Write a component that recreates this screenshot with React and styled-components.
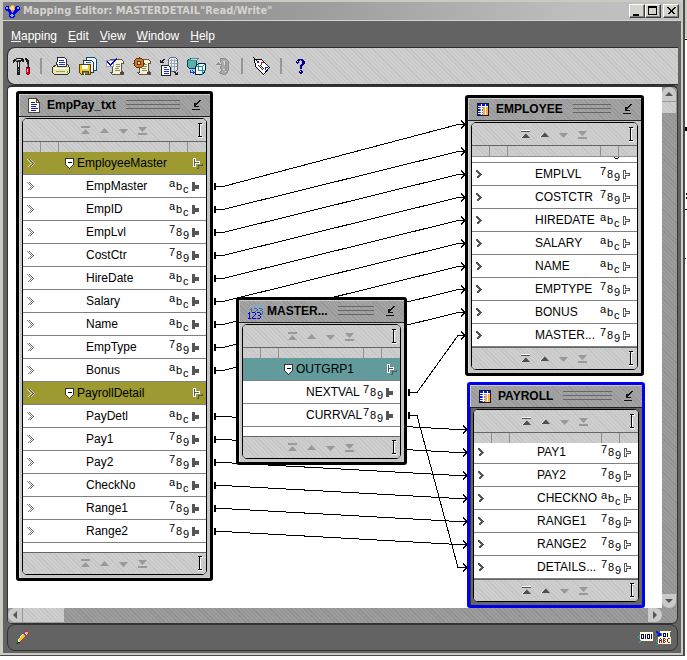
import React from "react";
import styled, { createGlobalStyle, css } from "styled-components";

const GlobalStyle = createGlobalStyle`
  * { box-sizing: border-box; }
  body { margin: 0; background: #fff; font: 12px "Liberation Sans", Arial, sans-serif; color: #000; }
  button { font: inherit; color: inherit; margin: 0; padding: 0; border: 0; background: none; }
  ul { list-style: none; margin: 0; padding: 0; }
  svg { display: block; flex: none; }
`;

const hatch = css`
  background-color: #cbcbcb;
  background-image: repeating-linear-gradient(45deg, #c5c5c5 0 1px, #cecece 1px 3px);
`;
const trough = css`
  background-color: #999;
  background-image: repeating-linear-gradient(45deg, #929292 0 1px, #9c9c9c 1px 3px);
`;

/* ---------- window chrome ---------- */
const Desktop = styled.div`
  display: flex;
  min-height: 100vh;
  padding-bottom: 4px;
`;
const Frame = styled.div`
  flex: 1;
  min-width: 0;
  display: flex;
  border-right: 2px solid #4a4a4a;
  border-bottom: 1px solid #4a4a4a;
`;
const Window = styled.main`
  flex: 1;
  min-width: 0;
  display: flex;
  flex-direction: column;
  border: 2px solid #c9cac2;
  border-left-width: 3px;
  background: #636363;
`;
const TitleBar = styled.header`
  display: flex;
  align-items: center;
  height: 19px;
  padding: 0 2px;
  border-bottom: 1px solid #d4d4cc;
  background: linear-gradient(90deg, #828282, #9c9c9c 45%, #bebebe 85%, #c0c0c0);
`;
const WindowTitle = styled.h1`
  flex: 1;
  margin: 0 0 0 3px;
  font: bold 11px/18px "DejaVu Sans Condensed", "DejaVu Sans", sans-serif;
  color: #d6d3ce;
  white-space: nowrap;
`;
const CaptionButton = styled.button`
  display: grid;
  place-items: center;
  width: 16px;
  height: 14px;
  margin-left: ${(p) => (p.$apart ? "2px" : "0")};
  background: #d4d4cc;
  border: 1px solid;
  border-color: #fff #404040 #404040 #fff;
  box-shadow: inset -1px -1px #848484;
`;
const MenuBar = styled.nav`
  display: flex;
  gap: 11px;
  height: 26px;
  padding: 0 8px;
  align-items: center;
`;
const MenuButton = styled.button`
  color: #fff;
  line-height: 16px;
  padding-top: 4px;
`;
const Toolbar = styled.div`
  display: flex;
  align-items: center;
  height: 38px;
  margin: 0 3px 0 4px;
  border: 1px solid #2e2a2e;
  border-right: 0;
  border-radius: 8px 0 0 8px;
  ${hatch}
`;
const ToolButton = styled.button`
  display: grid;
  place-items: center;
  width: 27px;
  height: 27px;
`;
const Divider = styled.span`
  width: 2px;
  height: 16px;
  margin: 0 5px;
  background: #969696;
`;
const Workspace = styled.section`
  flex: 1;
  display: grid;
  grid-template: minmax(0, 1fr) 15px / minmax(0, 1fr) 15px;
  margin: 0 3px 0 4px;
  border: 1px solid #333;
  border-top-width: 2px;
  border-radius: 5px 6px 6px 5px;
  overflow: hidden;
  ${trough}
`;
const Canvas = styled.div`
  position: relative;
  overflow: hidden;
  background: #fff;
`;
const StatusBar = styled.footer`
  display: flex;
  align-items: center;
  justify-content: space-between;
  height: 27px;
  margin: 0 3px 2px 4px;
  padding: 0 5px 0 8px;
  border: 1px solid #333;
  border-radius: 8px;
`;
const StatusIcons = styled.div`
  display: flex;
  align-items: center;
  gap: 2px;
`;

/* ---------- scroll bars ---------- */
const ScrollBar = styled.div`
  display: flex;
  flex-direction: ${(p) => (p.$vertical ? "column" : "row")};
  ${trough}
`;
const ScrollButton = styled.button`
  display: grid;
  place-items: center;
  width: 14px;
  height: 14px;
  background: #cacaca;
  border-radius: ${(p) => p.$corners};
`;
const Thumb = styled.div`
  width: ${(p) => (p.$vertical ? "14px" : "42px")};
  height: ${(p) => (p.$vertical ? "12px" : "14px")};
  border: 0 solid #999;
  border-width: ${(p) => (p.$vertical ? "1px 0 0 0" : "0 0 0 1px")};
  ${hatch}
`;
const Track = styled.div`
  flex: 1;
`;

/* ---------- mapping nodes ---------- */
const Links = styled.svg`
  position: absolute;
  left: 0;
  top: 0;
`;
const NodeBox = styled.article`
  position: absolute;
  left: ${(p) => p.$x}px;
  top: ${(p) => p.$y}px;
  width: ${(p) => p.$w}px;
  padding: 0 3px 3px;
  border: 3px solid ${(p) => (p.$selected ? "#0000f0" : "#000")};
  border-radius: 3px;
  background: ${(p) => (p.$selected ? "#666" : "#c6c6c6")};
  box-shadow: inset 1px 1px ${(p) => (p.$selected ? "#333" : "#ddd")};
`;
const NodeHeader = styled.header`
  display: flex;
  align-items: center;
  height: 23px;
  margin: 0 -3px 1px;
  padding: 0 9px 0 8px;
  border-bottom: 1px solid #222;
  background: repeating-linear-gradient(45deg, #989898 0 1px, #a3a3a3 1px 3px);
  box-shadow: inset 1px 1px #ccc;
`;
const NodeTitle = styled.h2`
  margin: 0 10px 0 ${(p) => (p.$tight ? 2 : 6)}px;
  font-size: 12px;
  font-weight: bold;
  line-height: 16px;
`;
const Grip = styled.span`
  flex: 1;
  height: 10px;
  margin-right: 11px;
  background: repeating-linear-gradient(180deg, #666 0 1px, transparent 1px 4px);
`;
const Panel = styled.div`
  border: 1px solid #000;
  border-radius: 5px;
  background: #fff;
  overflow: hidden;
`;
const NavBar = styled.div`
  display: grid;
  grid-template-columns: 1fr auto 1fr;
  align-items: center;
  height: ${(p) => (p.$foot ? 22 : 23)}px;
  padding-right: 2px;
  border: 0 solid #666;
  border-width: ${(p) => (p.$foot ? "1px 0 0" : "0 0 1px")};
  ${hatch}
`;
const NavGroup = styled.div`
  display: flex;
  grid-column: 2;
`;
const NavButton = styled.button`
  display: grid;
  place-items: center;
  width: 19px;
  height: 20px;
`;
const NavCursor = styled.span`
  justify-self: end;
  margin-right: 1px;
`;
const Ruler = styled.div`
  display: grid;
  grid-template-columns: 18px 18px 1fr 18px 19px;
  height: 10px;
  ${hatch}
`;
const RulerCell = styled.span`
  border: 0 solid #909090;
  border-width: ${(p) => (p.$side === "left" ? "0 1px 0 0" : p.$side === "right" ? "0 0 0 1px" : "0")};
`;
const PeekRow = styled.div`
  display: flex;
  justify-content: flex-end;
  height: 7px;
  padding-right: 18px;
  border-top: 1px solid #909090;
  border-bottom: 1px solid #808080;
`;
const Rows = styled.ul`
  padding-bottom: ${(p) => p.$room}px;
`;
const Row = styled.li`
  display: flex;
  align-items: center;
  height: 23px;
  padding: 0 ${(p) => (p.$fill ? 3 : 6)}px 0 4px;
  border-bottom: 1px solid #808080;
  background: ${(p) => p.$fill || "#fff"};
  ${(p) => p.$cut && "&:first-child { height: 21px; padding-bottom: 2px; }"}
`;
const RowName = styled.span`
  flex: 1;
  min-width: 0;
  padding-left: 50px;
  line-height: 16px;
  white-space: nowrap;
`;
const GroupName = styled.span`
  flex: 1;
  display: flex;
  align-items: center;
  gap: 3px;
  padding-left: ${(p) => (p.$near ? 28 : 29)}px;
  line-height: 16px;
  white-space: nowrap;
`;
const TypeMark = styled.span`
  display: flex;
  width: 20px;
  height: 18px;
  margin-right: 3px;
  font-size: 11px;
  line-height: 12px;
`;
const TypeChar = styled.span`
  width: 6px;
  margin-right: 1px;
  padding-top: ${(p) => p.$drop}px;
`;
const ChevronSlot = styled.span`
  width: 9px;
`;

/* ---------- icons ---------- */
const Icon = ({ w = 20, h = 20, snap, children }) => (
  <svg
    width={w}
    height={h}
    viewBox={snap ? `-0.5 -0.5 ${w} ${h}` : `0 0 ${w} ${h}`}
    fill="none"
    shapeRendering="crispEdges"
    aria-hidden="true"
  >
    {children}
  </svg>
);

/* Draws a bitmap icon: one character per pixel, looked up in the palette. */
const Pixels = ({ rows, palette }) => (
  <Icon w={Math.max(...rows.map((r) => r.length))} h={rows.length}>
    {Object.entries(palette).map(([key, fill]) => (
      <path
        key={key}
        fill={fill}
        d={rows
          .flatMap((r, y) => [...r].map((c, x) => (c === key ? `M${x} ${y}h1v1h-1z` : "")))
          .join("")}
      />
    ))}
  </Icon>
);

const AppIcon = () => (
  <Pixels
    palette={{ b: "#0000f0", o: "#f8a020", w: "#fff", c: "#70b8ff", y: "#ffd880" }}
    rows={[
      "......ooo......",
      ".bbb.oyyyo.bbb.",
      "bccboyywyobbccb",
      "bccboyyyyobbccb",
      "bbbbboyyyobbbbb",
      ".bbbbbooobbbbb.",
      "...bbb...bbbb..",
      "....bbb.bbbb...",
      "....bbbbbbb....",
      "....bbccbb.....",
      "....bccccb.....",
      "....bbccbb.....",
      ".....bbbb......",
    ]}
  />
);
const ToolsIcon = () => (
  <Pixels
    palette={{ k: "#1c1c1c", g: "#777", w: "#e8e8e8", r: "#e00020", d: "#800010" }}
    rows={[
      "...kkkkkkk..kk...",
      ".kkgwwwwkkk.kkk..",
      "kkkggkkkkkk..kkk.",
      "kk.kkkkk.kk..kkk.",
      "k...kwk.......kk.",
      "....kwk.......kk.",
      "....kwk.......gk.",
      "....kwk.......gk.",
      "....kwk.......gk.",
      "....kkk......dkkd",
      "....kkk......rrrd",
      "....kgk......rwrd",
      "....kkk......rwrd",
      "....kgk......rwrd",
      "....kkk......rrrd",
      "....kkk......drrd",
      "....kkk.......dd.",
    ]}
  />
);
const PrintIcon = () => (
  <Icon snap>
    <path d="M6 1h7l2 2v7H5z" fill="#fff" stroke="#224" />
    <path d="M7 4h5M7 6h6M7 8h6" stroke="#2030d0" />
    <path d="M1 11l4-3h1v2h9V8h1l2 3v5l-2 2H3l-2-2z" fill="#e8e8b0" stroke="#333" />
    <path d="M2 12h15" stroke="#fffff0" />
    <path d="M4 15h9" stroke="#a0a060" />
    <path d="M15 15h1" stroke="#30b030" strokeWidth="2" />
  </Icon>
);
const SaveAllIcon = () => (
  <Icon snap>
    <path d="M8 1h8l2 2v11H8z" fill="#f4fafc" stroke="#005080" />
    <path d="M5 4h8l2 2v10H5z" fill="#e8f4fa" stroke="#333" />
    <path d="M7 6h5" stroke="#2060a0" />
    <path d="M1 8h11v10H3l-2-2z" fill="#f0c820" stroke="#554400" />
    <path d="M4 9h5v3H4z" fill="#fff" stroke="#fff" />
    <path d="M4 15h6v3H4z" fill="#776" stroke="#554400" />
    <path d="M6 16v2" stroke="#fff" />
  </Icon>
);
const Scroll = () => (
  <>
    <path d="M5 3h11l2 2v2h-2v8l2 1v2H7l-2-2h2V6L5 5z" fill="#f8f4d0" stroke="#555" />
    <path d="M10 8h4M10 10h4M9 12h4M9 14h5" stroke="#887" />
    <path d="M15 16h3v1h-3z" fill="#b09060" stroke="#604020" />
  </>
);
const ValidateIcon = () => (
  <Icon snap>
    <Scroll />
    <path d="M1 4h7v6H1z" fill="#fff" stroke="#99b" />
    <path d="M2 6l3 3 6-6M2 5l3 3 6-6" stroke="#0000d0" />
  </Icon>
);
const GenerateIcon = () => (
  <Icon snap>
    <Scroll />
    <path d="M4 2h5l2 2v5l-2 2H4L2 9V4z" fill="#c87828" stroke="#6a3608" />
    <path d="M5 5h3v3H5z" fill="#f4e8c8" stroke="#6a3608" />
    <path d="M6 1h1M6 12h1M1 6v1M12 6v1" stroke="#6a3608" />
  </Icon>
);
const SyncIcon = () => (
  <Icon snap>
    <path d="M9 3l2-2h5l2 2v10l-2 2h-5l-2-2z" fill="#e4ecf4" stroke="#667" />
    <path d="M10 4h7M10 7h7M10 10h7M12 2v12M15 2v12" stroke="#9aa8b8" />
    <path d="M2 9h7l2 2v8H2z" fill="#fff" stroke="#222" />
    <path d="M4 11h3M4 13h5M4 15h5M4 17h5" stroke="#2030d0" />
    <path d="M6 2L1 6M1 3v3h3M14 15l4 3M18 15v3h-3" stroke="#222" />
  </Icon>
);
const CubesIcon = () => (
  <Icon snap>
    <path d="M1 4l3-2h8l-2 2v8H3l-2-2z" fill="#58b0b0" stroke="#045" />
    <path d="M2 4h8l2-2H5z" fill="#b8e8e8" stroke="#489090" />
    <path d="M9 10l3-3h7v7l-3 4H9z" fill="#f0fafa" stroke="#023" />
    <path d="M9 10h7v8M16 10l3-3M12 7v7h7" stroke="#289098" />
    <path d="M4 13v3h4M6 14l2 2-2 2" stroke="#0040d0" />
  </Icon>
);
const DisabledIcon = () => (
  <Icon snap>
    <path d="M7 2h5l3 3v9l-3 4H9l-3-2 2-2-1-3 1-3H3l4-3z" fill="#a8a8a8" stroke="#8c8c8c" />
    <path d="M2 8l3-3 3 3M9 5h2v3M9 13h3v2" stroke="#d8d8d8" />
    <path d="M12 5v9M13 5v9" stroke="#989898" />
  </Icon>
);
const TagIcon = () => (
  <Icon snap>
    <path d="M2 3h7l8 8-6 7-8-8z" fill="#fff" stroke="#000" />
    <path d="M1 1l4 4" stroke="#000" />
    <path d="M5 5h1v1H5z" stroke="#2020a0" />
    <path d="M8 6h3M9 5v3" stroke="#e00000" />
    <path d="M12 11h3M13 10v3" stroke="#0020f0" />
    <path d="M6 9l5 5M8 9l4 4" stroke="#222" />
  </Icon>
);
const HelpIcon = () => (
  <Pixels
    palette={{ b: "#000098", w: "#fff" }}
    rows={[
      "..bbbbb..",
      ".bbb.bbb.",
      "bwb...bbb",
      "bbb...bbb",
      ".b....bbb",
      ".....bbb.",
      "....bbb..",
      "....bb...",
      "....bb...",
      "....bb...",
      ".........",
      "....bb...",
      "...bwbb..",
      "...bbbb..",
      "....bb...",
    ]}
  />
);
const PencilIcon = () => (
  <Pixels
    palette={{ k: "#101010", y: "#f8c020", w: "#fff4b0", r: "#a84018", b: "#3050d0", p: "#f0a0a0", g: "#207060", d: "#c03020" }}
    rows={[
      ".........ddd..",
      "........dpppd.",
      ".......bbwppd.",
      "......wybbwd..",
      ".....wyyybr...",
      "....wyyyyr....",
      "....wyyyr.....",
      "...wyyyr......",
      "..wyyyr.......",
      "..wyyr........",
      ".gwwr.........",
      ".gkk..........",
      "gk............",
    ]}
  />
);
const tagPalette = { c: "#ffffd0", n: "#000080", t: "#20b0b0", r: "#b01030", b: "#0020e8" };
const BinaryTag = () => (
  <Pixels
    palette={tagPalette}
    rows={[
      "..ccccccccccccc.",
      "..ccccccccccccc.",
      "..cnnncncnnncnc.",
      ".tcncncncncncnc.",
      "t.cncncncncncnc.",
      "t.cncncncncncnc.",
      ".tcnnncncnnncnc.",
      "..ccccccccccccc.",
      "..tcccccccccccc.",
      "..t.............",
      ".t..............",
    ]}
  />
);
const BinaryTextTag = () => (
  <Pixels
    palette={tagPalette}
    rows={[
      "bb..ccccccccccc.",
      "bbb.cccccccccc..",
      ".bbbb.cnnncncc..",
      "..bbb.cncncncc..",
      ".bbbb.cncncncc..",
      "....cccnnncncc..",
      "..ccccccccccccc.",
      "..ccrccrrcccrrc.",
      ".tcrcrcrcrcrccc.",
      "t.crrrcrrccrccc.",
      "t.crcrcrcrcrccc.",
      ".tcrcrcrrcccrrc.",
      "..ccccccccccccc.",
      ".t..............",
    ]}
  />
);
const FileIcon = () => (
  <Icon w={14} h={16} snap>
    <path d="M1 1h8l3 4v10H1z" fill="#ffffd8" stroke="#444" />
    <path d="M9 1v4h3" stroke="#444" />
    <path d="M3 5h4M3 7h6M3 9h5M3 11h7M3 13h5" stroke="#1020c0" />
  </Icon>
);
const TableIcon = () => (
  <Pixels
    palette={{ k: "#181818", b: "#0018f0", w: "#fff", l: "#5878f0", o: "#ffb030" }}
    rows={[
      ".kkkkkkkkkkkk.",
      ".kbbbwbbbwbbk.",
      ".kbbbwbbbwbbk.",
      ".kwwwwwwwwwwk.",
      ".kbblwloowook.",
      ".kwwwwwoowook.",
      ".kbblwloowook.",
      ".kbblwloowook.",
      ".kwwwwwoowook.",
      ".kbblwloowook.",
      ".kwwwwwoowook.",
      ".kbblwloowook.",
      ".kkkkkkkkkkkk.",
    ]}
  />
);
const SequenceIcon = () => (
  <Pixels
    palette={{ n: "#0000e0", m: "#2878b8", l: "#80b0d0" }}
    rows={[
      "......l..lll.lll..",
      ".....ll....l...l..",
      "......l..lll.lll..",
      "......l..l.....l..",
      "....m..mmm..mmm...",
      "...mm.....m....m..",
      "....m....mm..mm...",
      "....m...m......m..",
      "..n..nnn..nnn..m..",
      ".nn.....n....n.m..",
      "..n.....n....nm...",
      "..n....n...nn.....",
      "..n...n......n....",
      "..n..n.......n....",
      ".nnn.nnnn.nnn.....",
    ]}
  />
);
const CollapseIcon = () => (
  <Icon w={10} h={10} snap>
    <path d="M9 0L4 5M8 0L4 4M3 2v4h4M4 2v3M0 9h8" stroke="#111" />
  </Icon>
);
const CursorIcon = () => (
  <Icon w={7} h={17} snap>
    <path d="M1 2h5M4 3v11M1 15h5" stroke="#fff" />
    <path d="M1 1h4M3 1v13M1 14h4" stroke="#000" />
  </Icon>
);
const Chevron = ({ bold, twin }) => (
  <Icon w={9} h={9} snap>
    {bold ? (
      <path d="M0 0l4 4l-4 4M1 0l4 4l-4 4M0 1l3 3l-3 3" stroke="#555" />
    ) : (
      <>
        <path d="M0 0l4 4l-4 4" stroke={twin ? "#ddd" : "#888"} />
        <path d="M2 0l4 4l-4 4" stroke={twin ? "#555" : "#666"} />
        {twin && <path d="M3 0l4 4l-4 4" stroke="#ccc" />}
      </>
    )}
  </Icon>
);
const PortOut = () => (
  <Icon w={8} h={9}>
    <path d="M0 0h3v3h4v4H3v2H0z" fill="#555" />
  </Icon>
);
const PortIn = () => (
  <Icon w={8} h={9} snap>
    <path d="M0 0h2v3h4v2H2v3H0z" fill="#fff" stroke="#555" />
  </Icon>
);
const PortGroup = () => (
  <Icon w={10} h={11} snap>
    <path d="M3 10h2V7h4V5" stroke="#555" />
    <path d="M0 0h2v3h4v2H2v3H0z" fill="#555" stroke="#fff" />
  </Icon>
);
const Shield = () => (
  <Icon w={9} h={11} snap>
    <path d="M0 0h8v6l-4 4-4-4z" fill="#fff" stroke="#333" />
    <path d="M2 4h4" stroke="#000" />
  </Icon>
);

const navShapes = {
  first: "M0 0h9v2H0zM4.500 3L9 8H0z",
  up: "M4.500 2L9 7H0z",
  down: "M0 3h9L4.500 8z",
  last: "M0 1h9L4.500 6zM0 7h9v2H0z",
};
const NavIcon = ({ kind, active }) => (
  <svg width="9" height="9" viewBox="0 0 9 9" aria-hidden="true">
    <path d={navShapes[kind]} fill={active ? "#505050" : "#999"} />
    {active && kind === "first" && <path d="M0 0h9v1H0z" fill="#fff" />}
    {active && <path d={kind === "up" ? "M4.500 2L0 7" : "M4.500 3L0 8"} stroke="#eee" fill="none" />}
  </svg>
);
const Arrow = ({ dir }) => (
  <svg width="8" height="8" viewBox="0 0 8 8" aria-hidden="true">
    <path
      d={{ up: "M4 2l4 4H0z", down: "M0 2h8L4 6z", left: "M2 4l4-4v8z", right: "M6 4L2 0v8z" }[dir]}
      fill="#555"
    />
  </svg>
);

/* ---------- node pieces ---------- */
const NavStrip = ({ foot, canScrollUp }) => (
  <NavBar $foot={foot}>
    <NavGroup>
      {["first", "up", "down", "last"].map((k, i) => (
        <NavButton key={k} aria-label={`Scroll ${k}`}>
          <NavIcon kind={k} active={canScrollUp && i < 2} />
        </NavButton>
      ))}
    </NavGroup>
    <NavCursor><CursorIcon /></NavCursor>
  </NavBar>
);

const Attribute = ({ name, type, input, plain, cut }) => (
  <Row $cut={cut}>
    <ChevronSlot>{!plain && <Chevron bold={input} />}</ChevronSlot>
    <RowName>{name}</RowName>
    <TypeMark>
      {type.split("").map((c, i) => (
        <TypeChar key={c} $drop={[0, 3, 6][i]}>{c}</TypeChar>
      ))}
    </TypeMark>
    {input ? <PortIn /> : <PortOut />}
  </Row>
);

const Group = ({ name, fill, plain }) => (
  <Row $fill={fill}>
    <ChevronSlot>{!plain && <Chevron twin />}</ChevronSlot>
    <GroupName $near={plain}><Shield />{name}</GroupName>
    <PortGroup />
  </Row>
);

function MappingNode({ title, icon, tight, x, y, w, rows, input, plain, selected, scrolled, peek, room = 0 }) {
  return (
    <NodeBox $x={x} $y={y} $w={w} $selected={selected}>
      <NodeHeader>
        {icon}
        <NodeTitle $tight={tight}>{title}</NodeTitle>
        <Grip />
        <button aria-label={`Minimize ${title}`}><CollapseIcon /></button>
      </NodeHeader>
      <Panel>
        <NavStrip canScrollUp={scrolled} />
        <Ruler>
          <RulerCell $side="left" />
          <RulerCell $side="left" />
          <RulerCell />
          <RulerCell $side="right" />
          <RulerCell $side="right" />
        </Ruler>
        {peek && (
          <PeekRow>
            <Icon w={5} h={2}><path d="M0 0h1v1H0zM4 0h1v1H4zM1 1h3v1H1z" fill="#000" /></Icon>
          </PeekRow>
        )}
        <Rows $room={room}>
          {rows.map(([name, type, fill]) =>
            fill ? (
              <Group key={name} name={name} fill={fill} plain={plain} />
            ) : (
              <Attribute key={name} name={name} type={type} input={input} plain={plain} cut={scrolled && !peek} />
            )
          )}
        </Rows>
        <NavStrip foot canScrollUp={scrolled} />
      </Panel>
    </NodeBox>
  );
}

/* ---------- data ---------- */
const OLIVE = "#9c9a31";
const TEAL = "#639a9c";
const abc = "abc";
const num = "789";

const empPay = [
  ["EmployeeMaster", "", OLIVE],
  ["EmpMaster", abc], ["EmpID", abc], ["EmpLvl", num], ["CostCtr", num], ["HireDate", abc],
  ["Salary", abc], ["Name", abc], ["EmpType", num], ["Bonus", abc],
  ["PayrollDetail", "", OLIVE],
  ["PayDetl", abc], ["Pay1", num], ["Pay2", num], ["CheckNo", abc], ["Range1", num], ["Range2", num],
];
const employee = [
  ["EMPLVL", num], ["COSTCTR", num], ["HIREDATE", abc], ["SALARY", abc],
  ["NAME", abc], ["EMPTYPE", num], ["BONUS", abc], ["MASTER...", num],
];
const payroll = [
  ["PAY1", num], ["PAY2", num], ["CHECKNO", abc], ["RANGE1", num], ["RANGE2", num], ["DETAILS...", num],
];
const sequence = [["OUTGRP1", "", TEAL], ["NEXTVAL", num], ["CURRVAL", num]];

const links = [
  [207, 99, 457, 37], [207, 122, 457, 64], [207, 145, 457, 87], [207, 168, 457, 110], [207, 191, 457, 133],
  [207, 214, 457, 156], [207, 237, 457, 179], [207, 260, 457, 202], [207, 283, 457, 225],
  [207, 329, 459, 342], [207, 352, 459, 365], [207, 375, 459, 388], [207, 398, 459, 411],
  [207, 421, 459, 434], [207, 444, 459, 457],
  [401, 305, 457, 248], [401, 328, 459, 480],
];

const menus = ["Mapping", "Edit", "View", "Window", "Help"];
const tools = [
  ["Tools", ToolsIcon], null,
  ["Print", PrintIcon], ["Save all", SaveAllIcon], ["Validate", ValidateIcon], ["Generate", GenerateIcon],
  ["Synchronize", SyncIcon], ["Add object", CubesIcon], ["Refresh", DisabledIcon], null,
  ["Properties", TagIcon], null,
  ["Help", HelpIcon],
];

export default function App() {
  return (
    <Desktop>
      <GlobalStyle />
      <Frame>
        <Window>
          <TitleBar>
            <AppIcon />
            <WindowTitle>Mapping Editor: MASTERDETAIL"Read/Write"</WindowTitle>
            <CaptionButton aria-label="Minimize">
              <Icon w={10} h={10}><path d="M1 8h6v2H1z" fill="#000" /></Icon>
            </CaptionButton>
            <CaptionButton aria-label="Maximize">
              <Icon w={10} h={10} snap><path d="M0 0h8v8H0zM0 1h8" stroke="#000" /></Icon>
            </CaptionButton>
            <CaptionButton $apart aria-label="Close">
              <Icon w={10} h={10} snap><path d="M1 1l7 7M8 1L1 8M2 1l7 7M9 1L2 8" stroke="#000" /></Icon>
            </CaptionButton>
          </TitleBar>
          <MenuBar>
            {menus.map((m) => (
              <MenuButton key={m}><u>{m[0]}</u>{m.slice(1)}</MenuButton>
            ))}
          </MenuBar>
          <Toolbar role="toolbar">
            {tools.map((t, i) => {
              if (!t) return <Divider key={i} />;
              const Glyph = t[1];
              return <ToolButton key={i} aria-label={t[0]}><Glyph /></ToolButton>;
            })}
          </Toolbar>
          <Workspace>
            <Canvas>
              <Links width="100%" height="100%" fill="none" stroke="#000" shapeRendering="crispEdges" aria-hidden="true">
                {links.map(([x1, y1, x2, y2]) => (
                  <path
                    key={y1 * 1000 + y2}
                    d={`M${x1 - 0.5} ${y1 - 3}v7M${x1 + 0.5} ${y1 - 3}v7M${x1} ${y1 + 0.5}H${x1 + 8}L450 ${y2 + 0.5}H${x2}M${x2 - 4} ${y2 - 3.5}l4 4l-4 4`}
                  />
                ))}
              </Links>
              <MappingNode title="EmpPay_txt" icon={<FileIcon />} x={8} y={4} w={197} rows={empPay} room={9} />
              <MappingNode title="EMPLOYEE" icon={<TableIcon />} x={457} y={8} w={179} rows={employee} input scrolled peek />
              <MappingNode title="PAYROLL" icon={<TableIcon />} x={459} y={295} w={178} rows={payroll} input selected scrolled />
              <MappingNode title="MASTER..." icon={<SequenceIcon />} tight x={228} y={210} w={171} rows={sequence} plain room={9} />
            </Canvas>
            <ScrollBar $vertical>
              <ScrollButton aria-label="Scroll up" $corners="7px 7px 0 0"><Arrow dir="up" /></ScrollButton>
              <Thumb $vertical />
              <Track />
              <ScrollButton aria-label="Scroll down" $corners="0 0 7px 7px"><Arrow dir="down" /></ScrollButton>
            </ScrollBar>
            <ScrollBar>
              <ScrollButton aria-label="Scroll left" $corners="7px 0 0 7px"><Arrow dir="left" /></ScrollButton>
              <Thumb />
              <Track />
              <ScrollButton aria-label="Scroll right" $corners="0 7px 7px 0"><Arrow dir="right" /></ScrollButton>
            </ScrollBar>
          </Workspace>
          <StatusBar>
            <PencilIcon />
            <StatusIcons>
              <BinaryTag />
              <BinaryTextTag />
            </StatusIcons>
          </StatusBar>
        </Window>
      </Frame>
      <Icon w={2} h={300}>
        <path d="M0 0h2v38H0z" fill="#c9cac2" />
        <path d="M0 39h2v1H0zM0 127h2v4H0zM1 193h1v2H1zM1 197h1v2H1zM0 209h2v1H0zM0 258h1v1H0z" fill="#000" />
      </Icon>
    </Desktop>
  );
}
